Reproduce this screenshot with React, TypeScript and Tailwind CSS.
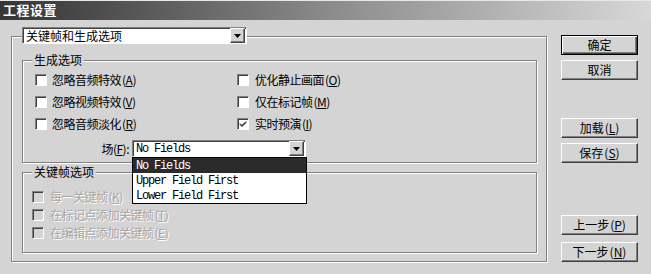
import React from 'react';

const cjk = "font-['Noto_Sans_CJK_SC',sans-serif]";

const genOptions = [
  [
    { text: '忽略音频特效', key: 'A', checked: false },
    { text: '优化静止画面', key: 'O', checked: false },
  ],
  [
    { text: '忽略视频特效', key: 'V', checked: false },
    { text: '仅在标记帧', key: 'M', checked: false },
  ],
  [
    { text: '忽略音频淡化', key: 'R', checked: false },
    { text: '实时预演', key: 'I', checked: true },
  ],
];

const keyOptions = [
  { text: '每一关键帧', key: 'K' },
  { text: '在标记点添加关键帧', key: 'T' },
  { text: '在编辑点添加关键帧', key: 'E' },
];

function Label({ text, k }: { text: string; k: string }) {
  return (
    <span>
      {text}
      <span className="ml-[1px]">(</span>
      <span className="underline">{k}</span>
      <span>)</span>
    </span>
  );
}

function Check({ checked, disabled }: { checked?: boolean; disabled?: boolean }) {
  return (
    <span
      className={`flex h-[12px] w-[12px] shrink-0 items-center justify-center border border-t-[#808080] border-l-[#808080] border-b-white border-r-white shadow-[inset_1px_1px_0_#404040] ${
        disabled ? 'bg-[#d4d4d4]' : 'bg-white'
      }`}
    >
      {checked && (
        <svg width="8" height="8" viewBox="0 0 8 8">
          <path d="M1 3.5 L3 5.5 L7 1.5 M1 4.5 L3 6.5 L7 2.5" stroke="#000" strokeWidth="1" fill="none" />
        </svg>
      )}
    </span>
  );
}

function Arrow() {
  return (
    <span className="flex h-[15px] w-[15px] items-center justify-center bg-[#d4d4d4] border border-t-white border-l-white border-b-[#404040] border-r-[#404040] shadow-[inset_-1px_-1px_0_#808080]">
      <svg width="7" height="4" viewBox="0 0 7 4">
        <path d="M0 0 H7 L3.5 4 Z" fill="#000" />
      </svg>
    </span>
  );
}

function Button({ children, main, className = '' }: { children: React.ReactNode; main?: boolean; className?: string }) {
  return (
    <div
      className={`flex h-[20px] w-[77px] items-center justify-center bg-[#d4d4d4] text-[12px] text-black ${
        main
          ? 'border border-black shadow-[inset_1px_1px_0_#fff,inset_-1px_-1px_0_#404040,inset_-2px_-2px_0_#808080]'
          : 'border border-t-white border-l-white border-b-[#404040] border-r-[#404040] shadow-[inset_-1px_-1px_0_#808080]'
      } ${className}`}
    >
      {children}
    </div>
  );
}

function GroupBox({
  title,
  className = '',
  children,
}: {
  title: string;
  className?: string;
  children: React.ReactNode;
}) {
  return (
    <div
      className={`relative ml-[10px] w-[515px] border border-[#808080] shadow-[inset_1px_1px_0_#fff,1px_1px_0_#fff] ${className}`}
    >
      <span className="absolute -top-[9px] left-[9px] bg-[#d4d4d4] px-[2px] text-[12px] leading-[16px] text-black">
        {title}
      </span>
      {children}
    </div>
  );
}

export default function App() {
  return (
    <div className={`h-[274px] w-[651px] overflow-hidden bg-[#d4d4d4] ${cjk}`}>
      {/* Title bar */}
      <div className="flex h-[20px] items-center bg-linear-to-r from-[#353535] via-[#8a8a8a] to-[#d8d8d8] pl-[3px] shadow-[inset_0_1px_0_#e8e8e8]">
        <span className="text-[13px] font-bold tracking-[0.5px] text-white">工程设置</span>
      </div>

      <div className="flex pl-[11px] pt-[16px]">
        {/* Main panel */}
        <div className="flex h-[226px] w-[536px] flex-col border border-[#808080] shadow-[inset_1px_1px_0_#fff,1px_1px_0_#fff]">
          <div className="-mt-[10px] ml-[10px] flex h-[17px] w-[225px] items-center justify-between border border-t-[#808080] border-l-[#808080] border-b-white border-r-white bg-white pr-[1px] shadow-[inset_1px_1px_0_#404040]">
            <span className="pl-[3px] text-[12px] leading-none text-black">关键帧和生成选项</span>
            <Arrow />
          </div>

          <GroupBox title="生成选项" className="mt-[16px] h-[103px]">
            <div className="flex flex-col pl-[12px] pt-[8px] text-[12px] text-black tracking-[-0.5px]">
              {genOptions.map((row, i) => (
                <div key={i} className="flex h-[22px] items-center">
                  <div className="flex w-[202px] items-center gap-[5px]">
                    <Check checked={row[0].checked} />
                    <Label text={row[0].text} k={row[0].key} />
                  </div>
                  <div className="flex items-center gap-[6px]">
                    <Check checked={row[1].checked} />
                    <Label text={row[1].text} k={row[1].key} />
                  </div>
                </div>
              ))}
              <div className="mt-[5px] flex h-[17px] items-center">
                <span className="w-[94px] text-right text-[12px]">
                  场(<span className="underline">F</span>):
                </span>
                <div className="relative ml-[3px]">
                  <div className="flex h-[17px] w-[174px] items-center justify-between border border-t-[#808080] border-l-[#808080] border-b-white border-r-white bg-white pr-[1px] shadow-[inset_1px_1px_0_#404040]">
                    <span className="pl-[3px] font-['Liberation_Mono',monospace] text-[12px] tracking-[-1.2px] text-black">
                      No Fields
                    </span>
                    <Arrow />
                  </div>
                  {/* Open dropdown list */}
                  <div className="absolute left-0 top-full z-10 w-[175px] border border-black bg-white font-['Liberation_Mono',monospace] text-[12px] tracking-[-1.2px]">
                    <div className="flex h-[15px] items-center bg-[#2b2b2b] pl-[3px] text-white">No Fields</div>
                    <div className="flex h-[15px] items-center pl-[3px] text-black">Upper Field First</div>
                    <div className="flex h-[15px] items-center pl-[3px] text-black">Lower Field First</div>
                  </div>
                </div>
              </div>
            </div>
          </GroupBox>

          <GroupBox title="关键帧选项" className="mt-[9px] h-[81px]">
            <div className="flex flex-col pl-[9px] pt-[15px] text-[12px] tracking-[-0.5px] text-[#a6a6a6] [text-shadow:1px_1px_0_#fff]">
              {keyOptions.map((o) => (
                <div key={o.key} className="flex h-[18px] items-center gap-[6px]">
                  <Check disabled />
                  <Label text={o.text} k={o.key} />
                </div>
              ))}
            </div>
          </GroupBox>
        </div>

        {/* Button column */}
        <div className="-mt-[1px] ml-[14px] flex flex-col">
          <Button main>确定</Button>
          <Button className="mt-[5px]">取消</Button>
          <Button className="mt-[38px]">
            <Label text="加载" k="L" />
          </Button>
          <Button className="mt-[5px]">
            <Label text="保存" k="S" />
          </Button>
          <Button className="mt-[52px]">
            <Label text="上一步" k="P" />
          </Button>
          <Button className="mt-[7px]">
            <Label text="下一步" k="N" />
          </Button>
        </div>
      </div>
    </div>
  );
}
